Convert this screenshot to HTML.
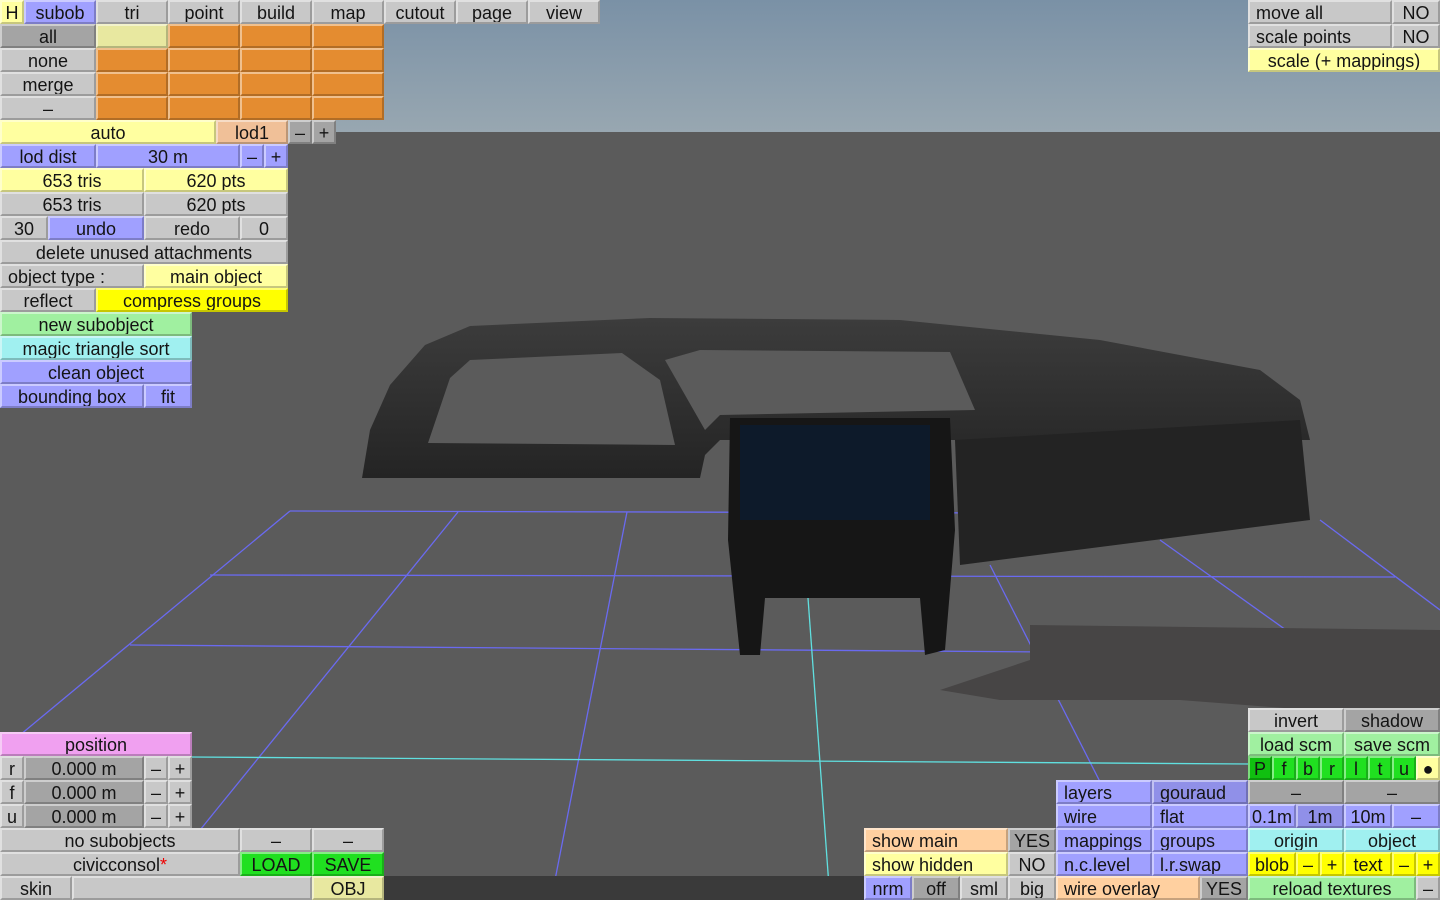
<!DOCTYPE html>
<html><head><meta charset="utf-8"><style>
*{margin:0;padding:0;box-sizing:border-box}
body{width:1440px;height:900px;overflow:hidden;position:relative;background:#5b5b5b;font-family:"Liberation Sans",sans-serif}
.sky{position:absolute;left:0;top:0;width:1440px;height:132px;background:linear-gradient(#7a91a6,#98a7b1)}
.b{position:absolute;height:24px;line-height:23px;font-size:18px;color:#141414;text-align:center;background:#c8c8c8;border-top:2px solid rgba(255,255,255,.45);border-left:2px solid rgba(255,255,255,.45);border-bottom:2px solid rgba(0,0,0,.22);border-right:2px solid rgba(0,0,0,.22);white-space:nowrap;overflow:hidden}
.l{text-align:left;padding-left:6px}
.g{background:#c8c8c8}.dg{background:#a4a4a4}.o{background:#e48c30}.py{background:#e8e8a0}
.y{background:#ffffa0}.Y{background:#ffff00}.t{background:#f0c098}.bl{background:#a0a0ff}.db{background:#9090e8}
.gr{background:#a0f0a0}.G{background:#20e020}.GG{background:#10c010}.c{background:#a0f0f0}.p{background:#f0a0f0}.tn{background:#ffd0a0}
</style></head><body>
<div class="sky"></div>
<svg style="position:absolute;left:0;top:0" width="1440" height="900">
<defs><linearGradient id="dg" x1="0" y1="0" x2="0" y2="1"><stop offset="0" stop-color="#3c3c3c"/><stop offset="1" stop-color="#242424"/></linearGradient></defs>
<g stroke="#6a6af0" stroke-width="1.3" fill="none">
<line x1="290" y1="511" x2="1010" y2="513"/>
<line x1="210" y1="575" x2="1395" y2="577"/>
<line x1="130" y1="645" x2="1440" y2="655"/>
<line x1="290" y1="511" x2="20" y2="735"/>
<line x1="458" y1="512" x2="200" y2="830"/>
<line x1="627" y1="512" x2="555" y2="880"/>
<line x1="990" y1="565" x2="1160" y2="900"/>
<line x1="1160" y1="540" x2="1440" y2="740"/>
<line x1="1320" y1="520" x2="1440" y2="610"/>
</g>
<line x1="190" y1="757" x2="1250" y2="764" stroke="#60e0e0" stroke-width="1.3"/>
<line x1="808" y1="598" x2="830" y2="900" stroke="#60e0e0" stroke-width="1.3"/>
<polygon points="1030,625 1440,630 1440,720 1180,700 1000,700 940,690 1030,660" fill="#474545"/>
<polygon points="362,478 370,430 390,385 425,345 470,326 650,318 900,320 1100,340 1260,370 1300,400 1310,440 1000,440 720,440 705,455 700,478" fill="url(#dg)"/>
<polygon points="428,443 450,378 470,360 622,353 660,380 675,445" fill="#5b5b5b"/>
<polygon points="665,360 700,350 950,352 975,410 720,415 705,430" fill="#5b5b5b"/>
<polygon points="955,440 1300,420 1310,520 960,565" fill="#232323"/>
<polygon points="730,418 950,418 955,530 945,650 925,655 920,598 765,598 760,655 740,655 728,540" fill="#161616"/>
<rect x="740" y="425" width="190" height="95" fill="#0d1a2a"/>
</svg>

<!-- top bar -->
<div class="b y" style="left:0;top:0;width:24px">H</div>
<div class="b bl" style="left:24px;top:0;width:72px">subob</div>
<div class="b" style="left:96px;top:0;width:72px">tri</div>
<div class="b" style="left:168px;top:0;width:72px">point</div>
<div class="b" style="left:240px;top:0;width:72px">build</div>
<div class="b" style="left:312px;top:0;width:72px">map</div>
<div class="b" style="left:384px;top:0;width:72px">cutout</div>
<div class="b" style="left:456px;top:0;width:72px">page</div>
<div class="b" style="left:528px;top:0;width:72px">view</div>

<div class="b dg" style="left:0;top:24px;width:96px">all</div>
<div class="b py" style="left:96px;top:24px;width:72px"></div>
<div class="b o" style="left:168px;top:24px;width:72px"></div>
<div class="b o" style="left:240px;top:24px;width:72px"></div>
<div class="b o" style="left:312px;top:24px;width:72px"></div>
<div class="b" style="left:0;top:48px;width:96px">none</div>
<div class="b o" style="left:96px;top:48px;width:72px"></div>
<div class="b o" style="left:168px;top:48px;width:72px"></div>
<div class="b o" style="left:240px;top:48px;width:72px"></div>
<div class="b o" style="left:312px;top:48px;width:72px"></div>
<div class="b" style="left:0;top:72px;width:96px">merge</div>
<div class="b o" style="left:96px;top:72px;width:72px"></div>
<div class="b o" style="left:168px;top:72px;width:72px"></div>
<div class="b o" style="left:240px;top:72px;width:72px"></div>
<div class="b o" style="left:312px;top:72px;width:72px"></div>
<div class="b" style="left:0;top:96px;width:96px">–</div>
<div class="b o" style="left:96px;top:96px;width:72px"></div>
<div class="b o" style="left:168px;top:96px;width:72px"></div>
<div class="b o" style="left:240px;top:96px;width:72px"></div>
<div class="b o" style="left:312px;top:96px;width:72px"></div>

<div class="b y" style="left:0;top:120px;width:216px">auto</div>
<div class="b t" style="left:216px;top:120px;width:72px">lod1</div>
<div class="b dg" style="left:288px;top:120px;width:24px">–</div>
<div class="b dg" style="left:312px;top:120px;width:24px">+</div>
<div class="b bl" style="left:0;top:144px;width:96px">lod dist</div>
<div class="b bl" style="left:96px;top:144px;width:144px">30 m</div>
<div class="b bl" style="left:240px;top:144px;width:24px">–</div>
<div class="b bl" style="left:264px;top:144px;width:24px">+</div>
<div class="b y" style="left:0;top:168px;width:144px">653 tris</div>
<div class="b y" style="left:144px;top:168px;width:144px">620 pts</div>
<div class="b" style="left:0;top:192px;width:144px">653 tris</div>
<div class="b" style="left:144px;top:192px;width:144px">620 pts</div>
<div class="b" style="left:0;top:216px;width:48px">30</div>
<div class="b bl" style="left:48px;top:216px;width:96px">undo</div>
<div class="b" style="left:144px;top:216px;width:96px">redo</div>
<div class="b" style="left:240px;top:216px;width:48px">0</div>
<div class="b" style="left:0;top:240px;width:288px">delete unused attachments</div>
<div class="b l" style="left:0;top:264px;width:144px">object type :</div>
<div class="b y" style="left:144px;top:264px;width:144px">main object</div>
<div class="b" style="left:0;top:288px;width:96px">reflect</div>
<div class="b Y" style="left:96px;top:288px;width:192px">compress groups</div>
<div class="b gr" style="left:0;top:312px;width:192px">new subobject</div>
<div class="b c" style="left:0;top:336px;width:192px">magic triangle sort</div>
<div class="b bl" style="left:0;top:360px;width:192px">clean object</div>
<div class="b bl" style="left:0;top:384px;width:144px">bounding box</div>
<div class="b bl" style="left:144px;top:384px;width:48px">fit</div>

<!-- top right -->
<div class="b l" style="left:1248px;top:0;width:144px">move all</div>
<div class="b" style="left:1392px;top:0;width:48px">NO</div>
<div class="b l" style="left:1248px;top:24px;width:144px">scale points</div>
<div class="b" style="left:1392px;top:24px;width:48px">NO</div>
<div class="b y" style="left:1248px;top:48px;width:192px">scale (+ mappings)</div>

<!-- bottom left -->
<div style="position:absolute;left:0;top:876px;width:864px;height:24px;background:#3a3a3a"></div>
<div class="b p" style="left:0;top:732px;width:192px">position</div>
<div class="b" style="left:0;top:756px;width:24px">r</div>
<div class="b dg" style="left:24px;top:756px;width:120px">0.000 m</div>
<div class="b" style="left:144px;top:756px;width:24px">–</div>
<div class="b" style="left:168px;top:756px;width:24px">+</div>
<div class="b" style="left:0;top:780px;width:24px">f</div>
<div class="b dg" style="left:24px;top:780px;width:120px">0.000 m</div>
<div class="b" style="left:144px;top:780px;width:24px">–</div>
<div class="b" style="left:168px;top:780px;width:24px">+</div>
<div class="b" style="left:0;top:804px;width:24px">u</div>
<div class="b dg" style="left:24px;top:804px;width:120px">0.000 m</div>
<div class="b" style="left:144px;top:804px;width:24px">–</div>
<div class="b" style="left:168px;top:804px;width:24px">+</div>
<div class="b" style="left:0;top:828px;width:240px">no subobjects</div>
<div class="b" style="left:240px;top:828px;width:72px">–</div>
<div class="b" style="left:312px;top:828px;width:72px">–</div>
<div class="b" style="left:0;top:852px;width:240px">civicconsol<span style="color:#e00">*</span></div>
<div class="b G" style="left:240px;top:852px;width:72px">LOAD</div>
<div class="b G" style="left:312px;top:852px;width:72px">SAVE</div>
<div class="b" style="left:0;top:876px;width:72px">skin</div>
<div class="b" style="left:72px;top:876px;width:240px"></div>
<div class="b py" style="left:312px;top:876px;width:72px">OBJ</div>

<!-- bottom middle -->
<div class="b tn l" style="left:864px;top:828px;width:144px">show main</div>
<div class="b dg" style="left:1008px;top:828px;width:48px">YES</div>
<div class="b y l" style="left:864px;top:852px;width:144px">show hidden</div>
<div class="b" style="left:1008px;top:852px;width:48px">NO</div>
<div class="b bl" style="left:864px;top:876px;width:48px">nrm</div>
<div class="b dg" style="left:912px;top:876px;width:48px">off</div>
<div class="b" style="left:960px;top:876px;width:48px">sml</div>
<div class="b" style="left:1008px;top:876px;width:48px">big</div>
<div class="b bl l" style="left:1056px;top:780px;width:96px">layers</div>
<div class="b db l" style="left:1152px;top:780px;width:96px">gouraud</div>
<div class="b bl l" style="left:1056px;top:804px;width:96px">wire</div>
<div class="b bl l" style="left:1152px;top:804px;width:96px">flat</div>
<div class="b bl l" style="left:1056px;top:828px;width:96px">mappings</div>
<div class="b bl l" style="left:1152px;top:828px;width:96px">groups</div>
<div class="b bl l" style="left:1056px;top:852px;width:96px">n.c.level</div>
<div class="b bl l" style="left:1152px;top:852px;width:96px">l.r.swap</div>
<div class="b tn l" style="left:1056px;top:876px;width:144px">wire overlay</div>
<div class="b dg" style="left:1200px;top:876px;width:48px">YES</div>

<!-- bottom right -->
<div class="b" style="left:1248px;top:708px;width:96px">invert</div>
<div class="b dg" style="left:1344px;top:708px;width:96px">shadow</div>
<div class="b gr" style="left:1248px;top:732px;width:96px">load scm</div>
<div class="b gr" style="left:1344px;top:732px;width:96px">save scm</div>
<div class="b GG" style="left:1248px;top:756px;width:24px">P</div>
<div class="b G" style="left:1272px;top:756px;width:24px">f</div>
<div class="b G" style="left:1296px;top:756px;width:24px">b</div>
<div class="b G" style="left:1320px;top:756px;width:24px">r</div>
<div class="b G" style="left:1344px;top:756px;width:24px">l</div>
<div class="b G" style="left:1368px;top:756px;width:24px">t</div>
<div class="b G" style="left:1392px;top:756px;width:24px">u</div>
<div class="b y" style="left:1416px;top:756px;width:24px">●</div>
<div class="b dg" style="left:1248px;top:780px;width:96px">–</div>
<div class="b dg" style="left:1344px;top:780px;width:96px">–</div>
<div class="b bl" style="left:1248px;top:804px;width:48px">0.1m</div>
<div class="b db" style="left:1296px;top:804px;width:48px">1m</div>
<div class="b bl" style="left:1344px;top:804px;width:48px">10m</div>
<div class="b bl" style="left:1392px;top:804px;width:48px">–</div>
<div class="b c" style="left:1248px;top:828px;width:96px">origin</div>
<div class="b c" style="left:1344px;top:828px;width:96px">object</div>
<div class="b Y" style="left:1248px;top:852px;width:48px">blob</div>
<div class="b Y" style="left:1296px;top:852px;width:24px">–</div>
<div class="b Y" style="left:1320px;top:852px;width:24px">+</div>
<div class="b Y" style="left:1344px;top:852px;width:48px">text</div>
<div class="b Y" style="left:1392px;top:852px;width:24px">–</div>
<div class="b Y" style="left:1416px;top:852px;width:24px">+</div>
<div class="b gr" style="left:1248px;top:876px;width:168px">reload textures</div>
<div class="b" style="left:1416px;top:876px;width:24px">–</div>
</body></html>
